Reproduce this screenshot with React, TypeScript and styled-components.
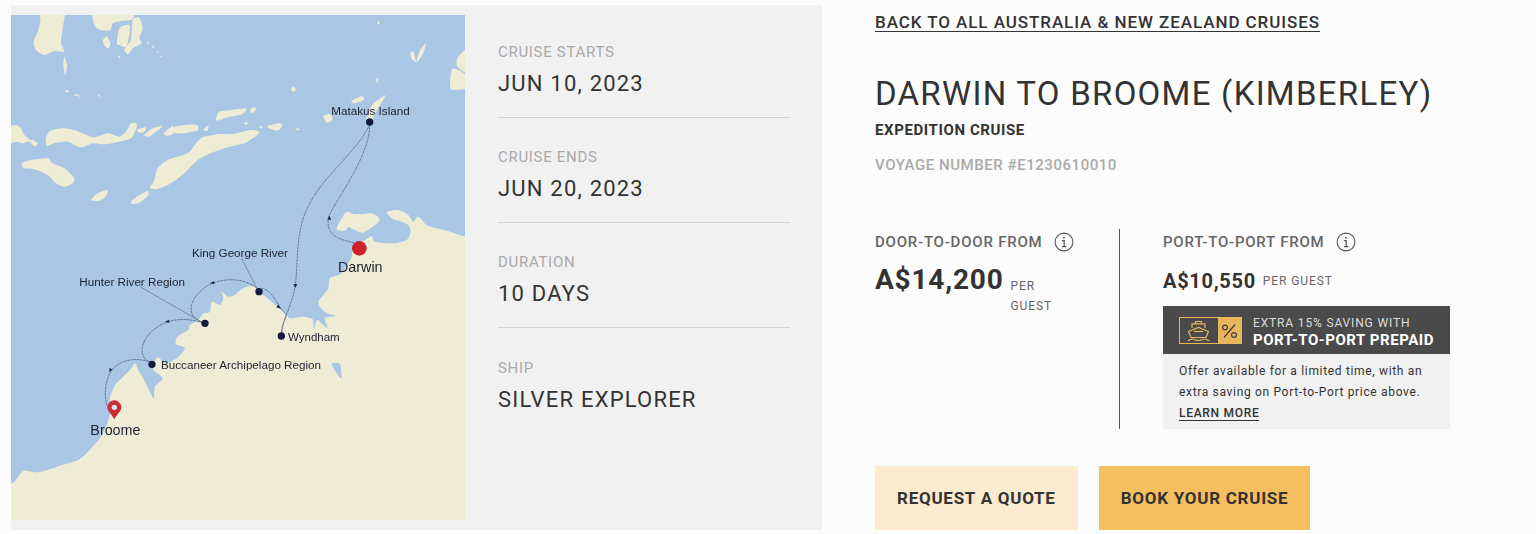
import React from "react";
import styled, { createGlobalStyle } from "styled-components";

const Global = createGlobalStyle`
  html, body { margin: 0; padding: 0; background: #fcfcfc; }
  body { font-family: Roboto, "Liberation Sans", sans-serif; color: #333; }
`;

const Page = styled.div`
  display: flex;
  align-items: flex-start;
  padding: 5px 0 0 11px;
  height: 529px;
  overflow: hidden;
`;
const Card = styled.section`
  display: flex;
  width: 811px;
  height: 525px;
  background: #f1f1f1;
`;
const MapBox = styled.div`
  width: 454px;
  height: 505px;
  margin-top: 10px;
  flex: none;
  overflow: hidden;
`;
const MapSvg = styled.svg`
  display: block;
  width: 454px;
  height: 505px;
  filter: blur(0.4px);
`;
const Facts = styled.div`
  flex: 1;
  padding: 8px 32px 0 33px;
`;
const Fact = styled.div<{ $last?: boolean }>`
  box-sizing: border-box;
  height: 105px;
  padding-top: ${(p) => (p.$last ? "30px" : "29px")};
  border-bottom: 1px solid ${(p) => (p.$last ? "transparent" : "#d2d2d2")};
`;
const FactLabel = styled.div`
  font-size: 15px;
  line-height: 20px;
  letter-spacing: 0.7px;
  color: #aaa;
`;
const FactValue = styled.div`
  margin-top: 7px;
  font-size: 22px;
  line-height: 30px;
  letter-spacing: 1.2px;
  color: #333;
`;
const Details = styled.div`
  margin-left: 53px;
  width: 590px;
`;
const BackLink = styled.a`
  display: inline-block;
  margin-top: 8px;
  font-size: 17px;
  font-weight: 500;
  line-height: 18px;
  letter-spacing: 0.93px;
  color: #333;
  border-bottom: 1px solid #333;
`;
const Title = styled.h1`
  margin: 42px 0 0;
  font-size: 33px;
  font-weight: 400;
  line-height: 40px;
  letter-spacing: 1.26px;
  color: #333;
`;
const Kind = styled.div`
  margin-top: 6px;
  font-size: 15px;
  font-weight: 700;
  line-height: 20px;
  letter-spacing: 0.6px;
  color: #333;
`;
const Voyage = styled.div`
  margin-top: 15px;
  font-size: 15px;
  font-weight: 500;
  line-height: 20px;
  letter-spacing: 0.55px;
  color: #aaa;
`;
const Prices = styled.div`
  display: flex;
  margin-top: 54px;
  height: 200px;
`;
const DoorCol = styled.div`
  box-sizing: border-box;
  width: 245px;
  border-right: 1px solid #555;
`;
const PortCol = styled.div`
  width: 287px;
  margin-left: 43px;
`;
const PriceLabel = styled.div`
  display: flex;
  align-items: center;
  gap: 12px;
  height: 26px;
  font-size: 15px;
  font-weight: 500;
  letter-spacing: 0.78px;
  color: #666;
`;
const InfoGlyph = styled.svg`
  width: 20px;
  height: 20px;
  flex: none;
`;
const DoorPriceRow = styled.div`
  display: flex;
  align-items: flex-start;
  gap: 7px;
  margin-top: 5px;
`;
const DoorPrice = styled.div`
  font-size: 28px;
  font-weight: 700;
  line-height: 40px;
  letter-spacing: 0.8px;
  color: #333;
`;
const PerGuest = styled.span`
  font-size: 12px;
  line-height: 20px;
  letter-spacing: 0.9px;
  color: #666;
`;
const WrappedPerGuest = styled(PerGuest)`
  width: 50px;
  margin-top: 16px;
`;
const PortPriceRow = styled.div`
  display: flex;
  align-items: center;
  gap: 7px;
  margin-top: 14px;
  height: 24px;
`;
const PortPrice = styled.div`
  font-size: 20px;
  font-weight: 700;
  letter-spacing: 0.7px;
  color: #333;
`;
const Band = styled.div`
  display: flex;
  align-items: center;
  gap: 11px;
  height: 48px;
  margin-top: 13px;
  padding-left: 16px;
  background: #4a4a4a;
`;
const BandIcon = styled.svg`
  width: 63px;
  height: 27px;
  flex: none;
`;
const BandText = styled.div`
  display: flex;
  flex-direction: column;
  padding-top: 3px;
`;
const BandTop = styled.span`
  font-size: 12px;
  line-height: 16px;
  letter-spacing: 0.85px;
  color: #ddd;
`;
const BandBottom = styled.span`
  font-size: 15px;
  font-weight: 700;
  line-height: 18px;
  letter-spacing: 0.55px;
  color: #fff;
`;
const Offer = styled.div`
  box-sizing: border-box;
  height: 75px;
  padding: 7px 16px 0;
  background: #f1f1f1;
  font-size: 12px;
  line-height: 21px;
  letter-spacing: 0.67px;
  color: #333;
`;
const LearnMore = styled.a`
  display: inline-block;
  font-size: 12px;
  font-weight: 500;
  line-height: 14px;
  letter-spacing: 0.7px;
  color: #333;
  border-bottom: 1px solid #333;
`;
const Actions = styled.div`
  display: flex;
  gap: 21px;
  margin-top: 37px;
`;
const Action = styled.button<{ $primary?: boolean }>`
  height: 64px;
  padding: 0 22px;
  border: 0;
  background: ${(p) => (p.$primary ? "#f5be5f" : "#fbebcf")};
  font-family: inherit;
  font-size: 17px;
  font-weight: 700;
  letter-spacing: 0.74px;
  color: #333;
`;

const SEA = "#aac6e5";
const LAND = "#efecd6";
const NAVY = "#14193f";

// Coast outlines as x,y lists; `smooth` runs a curve through the points so they read like a soft map image.
const lands: number[][] = [
  [123,20,193,20,188,85,183,130,193,155,163,153,133,165,108,150,101,125,113,95,121,65],
  [193,170,201,195,196,227,190,195],
  [283,20,398,20,398,57,363,63,338,70,331,90,303,90,283,75],
  [321,110,331,130,325,145,313,135,309,120],
  [358,85,388,75,388,105,378,140,358,135,351,130],
  [398,60,418,53,428,85,418,115,425,130,398,145,385,163,373,150,378,140,393,120],
  [1240,155,1248,185,1235,178,1231,160],
  [1277,130,1270,160,1250,188,1258,155],
  [1420,135,1375,170,1372,200,1420,225],
  [1360,205,1420,240,1420,262,1360,270,1350,255],
  [1155,286,1150,300,1125,340,1118,358,1098,362,1108,335,1120,310],
  [1055,303,1085,288,1092,300,1062,310],
  [970,348,990,342,998,358,982,369],
  [778,395,753,390,698,402,658,402,608,412,588,430,563,460,503,480,473,505,465,535,458,550,449,564,473,567,513,550,553,520,593,480,633,460,683,442,733,430,768,408],
  [138,415,148,395,183,385,223,390,253,402,283,412,323,400,358,410,378,395,393,370,410,370,408,388,393,415,358,425,313,433,278,430,243,442,203,425,163,430,141,437],
  [13,385,48,376,63,385,73,405,93,420,98,420,113,430,103,439,88,425,68,430,48,425,13,432],
  [411,390,438,382,433,395,418,398],
  [433,405,458,385,488,378,468,395,448,410],
  [491,400,518,378,521,400,503,408],
  [525,380,588,374,591,392,528,400],
  [610,390,625,376,622,392],
  [648,357,658,335,693,330,738,325,728,342,683,352,653,362],
  [752,326,766,322,765,335,752,338],
  [803,378,838,370,847,378,833,392,808,385],
  [65,490,93,480,143,475,158,490,193,505,223,535,218,550,193,560,168,550,143,525,103,508,73,505],
  [273,600,293,580,323,570,318,588,298,602],
  [393,605,408,592,443,572,443,588,418,608,398,612],
  [1010,688,1025,655,1040,635,1060,642,1085,642,1115,640,1138,655,1132,670,1090,698,1060,688,1045,680,1035,692],
  [-30,1445,33,1450,50,1437,70,1412,115,1417,180,1397,240,1377,285,1332,310,1297,330,1245,330,1195,345,1155,370,1130,390,1110,405,1090,415,1110,435,1145,460,1195,465,1160,488,1135,460,1110,460,1090,475,1072,495,1090,530,1075,555,1045,528,1032,532,1010,565,990,570,975,595,960,610,940,630,935,635,905,660,915,670,895,665,875,685,890,705,885,715,875,740,860,765,860,790,885,820,910,860,945,870,955,910,950,938,958,942,988,952,960,982,985,975,955,1005,948,980,940,960,920,955,905,970,885,985,865,990,835,1025,820,1055,770,1060,740,1095,720,1115,708,1125,725,1180,730,1220,720,1232,695,1225,675,1205,665,1180,658,1160,636,1195,630,1225,645,1240,665,1255,650,1280,675,1310,685,1350,695,1395,710,1450,715,1450,715,1450,1640,1450,1640,-30,1640,-30,1640,-30,1445],
];
const lakes: number[][] = [[995,1090,1020,1092,1024,1136,1005,1112]];

const smooth = (flat: number[]) => {
  const pts: [number, number][] = [];
  for (let i = 0; i < flat.length; i += 2) pts.push([flat[i], flat[i + 1]]);
  const n = pts.length;
  const k = 1 / 8;
  let d = `M${pts[0][0]} ${pts[0][1]}`;
  for (let i = 0; i < n; i++) {
    const p0 = pts[(i - 1 + n) % n];
    const p1 = pts[i];
    const p2 = pts[(i + 1) % n];
    const p3 = pts[(i + 2) % n];
    d += `C${p1[0] + (p2[0] - p0[0]) * k} ${p1[1] + (p2[1] - p0[1]) * k} ${p2[0] - (p3[0] - p1[0]) * k} ${p2[1] - (p3[1] - p1[1]) * k} ${p2[0]} ${p2[1]}`;
  }
  return `${d}Z`;
};

const specks: [number, number, number, number][] = [
  [443,128,3,3],[459,140,3,3],[473,155,3,2],[481,169,3,2],[358,170,3,3],
  [201,274,6,3],[228,285,6,3],[238,288,3,2],[297,287,3,3],[1135,68,3,5],[1132,242,3,8],
  [880,268,7,7],[738,370,5,5],[783,382,4,3],[893,388,6,3],
];
const labels: [string, number, number, number][] = [
  ["Matakus Island", 994, 344, 35],
  ["King George River", 576, 771, 35],
  ["Hunter River Region", 238, 857, 35],
  ["Wyndham", 864, 1023, 34.5],
  ["Buccaneer Archipelago Region", 483, 1107, 35],
  ["Darwin", 1014, 815, 43],
  ["Broome", 271, 1305, 43],
];
const routes = [
  "M1062 728C1020 718 975 710 986 650C1000 610 1110 470 1109 376",
  "M1106 380C1060 470 960 530 915 640C885 720 895 800 885 860C875 920 850 950 845 1000",
  "M845 998C845 965 862 955 858 942C830 920 820 870 785 865",
  "M770 865C730 830 650 830 605 870C570 900 555 950 608 967",
  "M606 968C550 950 490 955 445 1005C420 1035 420 1075 448 1085",
  "M448 1085C400 1070 345 1080 325 1130C312 1165 315 1190 321 1218",
];
const stops: [number, number][] = [[1109, 366], [777, 875], [844, 1008], [615, 970], [456, 1093]];
const arrows = [
  "M988 647L994 659L982 659Z", "M886 864L892 852L880 852Z", "M842 926L828 922L836 914Z",
  "M630 850L642 843L643 853Z", "M495 965L507 959L508 969Z", "M328 1117L328 1105L338 1108Z",
];

const RouteMap = () => (
  <MapSvg viewBox="33 45 1362 1515" role="img" aria-label="Route map">
    <rect x="-30" y="-30" width="1500" height="1700" fill={SEA} />
    {lands.map((pts) => <path key={pts.join()} d={smooth(pts)} fill={LAND} />)}
    {lakes.map((pts) => <path key={pts.join()} d={smooth(pts)} fill={SEA} />)}
    {specks.map(([x, y, rx, ry]) => <ellipse key={`${x}-${y}`} cx={x} cy={y} rx={rx} ry={ry} fill={LAND} />)}
    <path d="M725 775L772 868M420 860L605 966" stroke="#53657f" strokeWidth="1.8" fill="none" />
    {routes.map((d) => <path key={d} d={d} stroke="#27385c" strokeWidth="2.2" strokeDasharray="2.6 1.8" fill="none" />)}
    {arrows.map((d) => <path key={d} d={d} fill="#1d2b50" />)}
    {stops.map(([x, y]) => <circle key={`${x}-${y}`} cx={x} cy={y} r="11" fill={NAVY} />)}
    <circle cx="1078" cy="745" r="22" fill="#cc2229" />
    <path d="M343 1258C333 1240 322 1234 322 1222A21 21 0 0 1 364 1222C364 1234 353 1240 343 1258Z" fill="#cc2c35" />
    <circle cx="343" cy="1222" r="8" fill="#dfe5ea" />
    {labels.map(([t, x, y, s]) => (
      <text key={t} x={x} y={y} fontSize={s} fontFamily="'Liberation Sans', Arial, sans-serif" fill="#1c2130">{t}</text>
    ))}
  </MapSvg>
);

const InfoIcon = () => (
  <InfoGlyph viewBox="0 0 20 20" fill="none" stroke="#555" aria-hidden="true">
    <circle cx="10" cy="10" r="8.9" strokeWidth="1.1" />
    <path d="M8 8.6H10.2V14.4M8 14.6H12.4" strokeWidth="1.2" />
    <circle cx="9.9" cy="5.8" r="0.9" fill="#555" stroke="none" />
  </InfoGlyph>
);

const ShipBadge = () => (
  <BandIcon viewBox="0 0 63 27" aria-hidden="true">
    <rect x="0.5" y="0.5" width="62" height="26" fill="none" stroke="#e9b65b" />
    <rect x="39" y="0" width="24" height="27" fill="#e9b65b" />
    <g fill="none" stroke="#e9b65b" strokeWidth="1.2">
      <path d="M16.5 6.5V4.5H22.5V6.5M13 11V6.8H26V11" />
      <path d="M9.5 14.5L19.5 10.5L29.5 14.5L27 20.5H12Z" />
      <path d="M15 14.5H24" />
      <path d="M8.5 23.5C11 23.5 11 22 13.5 22S16.5 23.5 19.5 23.5S23 22 25.5 22S28 23.5 30.5 23.5" />
    </g>
    <g fill="none" stroke="#3d3d3d" strokeWidth="1.2">
      <circle cx="46" cy="10.5" r="2.4" />
      <circle cx="55" cy="18" r="2.4" />
      <path d="M56 7.5L45 20.5" />
    </g>
  </BandIcon>
);

const facts = [
  ["CRUISE STARTS", "JUN 10, 2023"],
  ["CRUISE ENDS", "JUN 20, 2023"],
  ["DURATION", "10 DAYS"],
  ["SHIP", "SILVER EXPLORER"],
];

export default function App() {
  return (
    <Page>
      <Global />
      <Card>
        <MapBox><RouteMap /></MapBox>
        <Facts>
          {facts.map(([label, value], i) => (
            <Fact key={label} $last={i === facts.length - 1}>
              <FactLabel>{label}</FactLabel>
              <FactValue>{value}</FactValue>
            </Fact>
          ))}
        </Facts>
      </Card>
      <Details>
        <BackLink>BACK TO ALL AUSTRALIA &amp; NEW ZEALAND CRUISES</BackLink>
        <Title>DARWIN TO BROOME (KIMBERLEY)</Title>
        <Kind>EXPEDITION CRUISE</Kind>
        <Voyage>VOYAGE NUMBER #E1230610010</Voyage>
        <Prices>
          <DoorCol>
            <PriceLabel>DOOR-TO-DOOR FROM <InfoIcon /></PriceLabel>
            <DoorPriceRow>
              <DoorPrice>A$14,200</DoorPrice>
              <WrappedPerGuest>PER GUEST</WrappedPerGuest>
            </DoorPriceRow>
          </DoorCol>
          <PortCol>
            <PriceLabel>PORT-TO-PORT FROM <InfoIcon /></PriceLabel>
            <PortPriceRow>
              <PortPrice>A$10,550</PortPrice>
              <PerGuest>PER GUEST</PerGuest>
            </PortPriceRow>
            <Band>
              <ShipBadge />
              <BandText>
                <BandTop>EXTRA 15% SAVING WITH</BandTop>
                <BandBottom>PORT-TO-PORT PREPAID</BandBottom>
              </BandText>
            </Band>
            <Offer>
              Offer available for a limited time, with an<br />
              extra saving on Port-to-Port price above.<br />
              <LearnMore>LEARN MORE</LearnMore>
            </Offer>
          </PortCol>
        </Prices>
        <Actions>
          <Action>REQUEST A QUOTE</Action>
          <Action $primary>BOOK YOUR CRUISE</Action>
        </Actions>
      </Details>
    </Page>
  );
}
